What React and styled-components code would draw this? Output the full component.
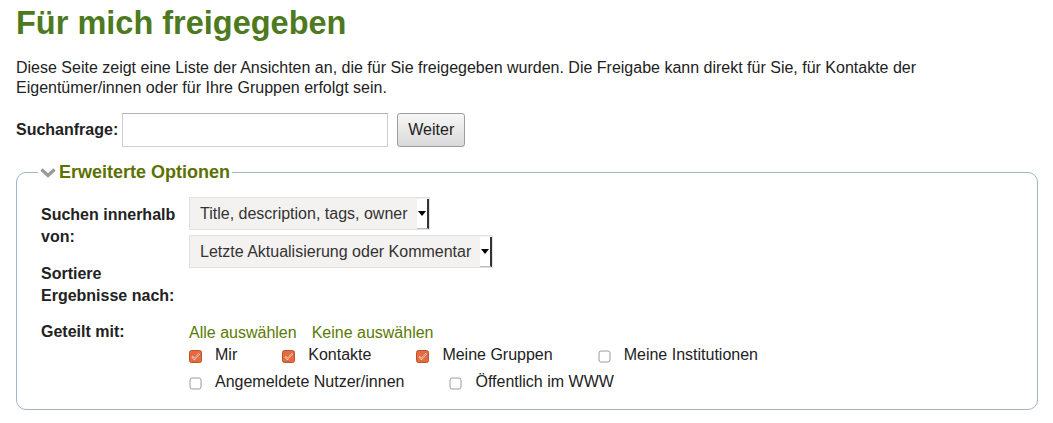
import React from "react";
import styled, { createGlobalStyle } from "styled-components";

const GlobalStyle = createGlobalStyle`
  body {
    margin: 0;
    padding: 0 15px 0 16px;
    background: #fff;
    font-family: "Liberation Sans", Arial, sans-serif;
    font-size: 16px;
    color: #222;
  }
`;

//------HEADER------\\
const Title = styled.h1`
  margin: 0;
  padding-top: 4px;
  font-size: 32.5px;
  line-height: 38px;
  font-weight: bold;
  color: #4e7a1f;
`;

const Intro = styled.p`
  margin: 16px 0 0;
  font-size: 16px;
  line-height: 20px;
  color: #222;
`;

//------SEARCH------\\
const SearchRow = styled.div`
  display: flex;
  align-items: center;
  margin-top: 15px;
`;

const Label = styled.label`
  font-weight: bold;
  font-size: 16px;
  line-height: 22px;
  color: #222;
`;

const SearchInput = styled.input`
  box-sizing: border-box;
  width: 266px;
  height: 34px;
  margin-left: 4px;
  border: 1px solid #cfcfcf;
  border-top-color: #b5b5b5;
  background: #fff;
  font: inherit;
  padding: 0 6px;
  outline: none;
`;

const Button = styled.button`
  box-sizing: border-box;
  height: 34px;
  width: 68px;
  margin-left: 9px;
  padding: 0;
  border: 1px solid #9c9c9c;
  border-radius: 3px;
  background: linear-gradient(#f7f7f7, #d9d9d9);
  font-family: "Liberation Sans", Arial, sans-serif;
  font-size: 16px;
  color: #222;
`;

//------FIELDSET------\\
const Fieldset = styled.fieldset`
  margin: 15px 0 0;
  padding: 14px 24px 16px;
  border: 1px solid #a3b5c5;
  border-radius: 10px;
`;

const Legend = styled.legend`
  display: flex;
  align-items: center;
  gap: 3px;
  margin-left: -3px;
  padding: 0 2px;
  font-size: 18px;
  font-weight: bold;
  color: #5b7100;
`;

const FormGrid = styled.div`
  display: grid;
  grid-template-columns: 148px 1fr;
  row-gap: 14px;
`;

const LabelStack = styled.div`
  display: flex;
  flex-direction: column;
  gap: 15px;
  padding-top: 7px;
`;

const Controls = styled.div`
  display: flex;
  flex-direction: column;
  align-items: flex-start;
  gap: 5px;
`;

const SelectBox = styled.div`
  box-sizing: border-box;
  display: flex;
  align-items: stretch;
  height: 33px;
  background: #f3f2f0;
  border: 1px solid #e2e1df;
  color: #333;
`;

const SelectText = styled.span`
  display: flex;
  align-items: center;
  padding: 0 9px 0 10px;
  white-space: nowrap;
`;

const Arrow = styled.span`
  display: flex;
  align-items: center;
  justify-content: center;
  width: 10px;
  background: #fff;
  border-right: 2px solid #333;
  border-bottom: 1px solid #bbb;
  margin-top: 1px;
`;

const Triangle = styled.span`
  width: 0;
  height: 0;
  border-left: 4px solid transparent;
  border-right: 4px solid transparent;
  border-top: 5px solid #000;
`;

const LinkRow = styled.div`
  display: flex;
  gap: 15px;
  line-height: 22px;
  padding-top: 1px;
`;

const Link = styled.a`
  color: #5b7a00;
  text-decoration: none;
  cursor: pointer;
`;

const CheckList = styled.div`
  display: flex;
  flex-wrap: wrap;
  row-gap: 5px;
`;

const CheckItem = styled.label`
  display: flex;
  align-items: center;
  margin-right: 45px;
  line-height: 22px;
  color: #222;
`;

const BoxWrap = styled.span`
  display: flex;
  width: 26px;
  padding-top: 2px;
`;

const Chevron = () => (
  <svg width="16" height="10" viewBox="0 0 16 10">
    <path d="M1.5 1.5 L8 7.5 L14.5 1.5" fill="none" stroke="#9a9a9a" strokeWidth="3.2" />
  </svg>
);

const CheckBox = ({ checked }) =>
  checked ? (
    <svg width="13" height="13" viewBox="0 0 13 13">
      <rect x="0.5" y="0.5" width="12" height="12" rx="2" fill="#e8693c" stroke="#b8552f" />
      <path d="M3 6.5 L5.5 9 L10.5 3.5" fill="none" stroke="#fde3d6" strokeWidth="1.8" />
      <path d="M3 6.5 L5.5 9 L10.5 3.5" fill="none" stroke="#8c3b1f" strokeWidth="0.6" />
    </svg>
  ) : (
    <svg width="13" height="13" viewBox="0 0 13 13">
      <rect x="1" y="1" width="11" height="11" rx="2" fill="#fff" stroke="#a39a92" />
    </svg>
  );

const Select = ({ children }) => (
  <SelectBox>
    <SelectText>{children}</SelectText>
    <Arrow>
      <Triangle />
    </Arrow>
  </SelectBox>
);

const options = [
  { label: "Mir", checked: true },
  { label: "Kontakte", checked: true },
  { label: "Meine Gruppen", checked: true },
  { label: "Meine Institutionen", checked: false },
  { label: "Angemeldete Nutzer/innen", checked: false },
  { label: "Öffentlich im WWW", checked: false },
];

export default function App() {
  return (
    <>
      <GlobalStyle />
      <Title>Für mich freigegeben</Title>
      <Intro>
        Diese Seite zeigt eine Liste der Ansichten an, die für Sie freigegeben wurden. Die Freigabe kann direkt
        für Sie, für Kontakte der Eigentümer/innen oder für Ihre Gruppen erfolgt sein.
      </Intro>
      <SearchRow>
        <Label>Suchanfrage:</Label>
        <SearchInput type="text" />
        <Button>Weiter</Button>
      </SearchRow>
      <Fieldset>
        <Legend>
          <Chevron />
          Erweiterte Optionen
        </Legend>
        <FormGrid>
          <LabelStack>
            <Label>
              Suchen innerhalb
              <br />
              von:
            </Label>
            <Label>
              Sortiere
              <br />
              Ergebnisse nach:
            </Label>
          </LabelStack>
          <Controls>
            <Select>Title, description, tags, owner</Select>
            <Select>Letzte Aktualisierung oder Kommentar</Select>
          </Controls>
          <Label>Geteilt mit:</Label>
          <div>
            <LinkRow>
              <Link>Alle auswählen</Link>
              <Link>Keine auswählen</Link>
            </LinkRow>
            <CheckList>
              {options.map((o) => (
                <CheckItem key={o.label}>
                  <BoxWrap>
                    <CheckBox checked={o.checked} />
                  </BoxWrap>
                  {o.label}
                </CheckItem>
              ))}
            </CheckList>
          </div>
        </FormGrid>
      </Fieldset>
    </>
  );
}
